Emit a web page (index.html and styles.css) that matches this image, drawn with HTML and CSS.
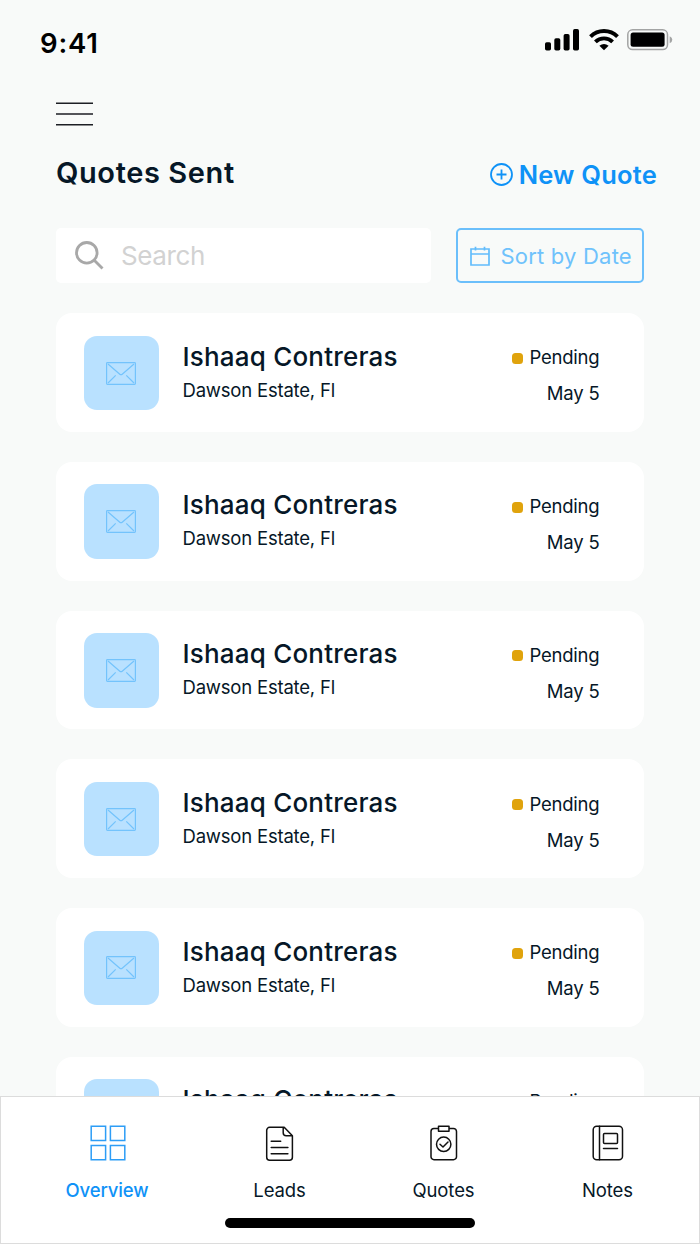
FILE: index.html
```html
<!DOCTYPE html>
<html lang="en">
<head>
    <meta charset="UTF-8">
    <meta name="viewport" content="width=device-width, initial-scale=1.0">
    <title>Quotes Sent</title>
    <link rel="stylesheet" href="styles.css">
</head>
<body>
    <svg class="sprite" width="0" height="0">
        <symbol id="mail" viewBox="0 0 30 23">
            <rect x=".6" y=".6" width="28.8" height="21.8" rx=".8"/>
            <path d="M2 2l11.800 10.200q1.200 1 2.400 0L28 2M2 21l7.700-7.700M28 21l-7.700-7.700"/>
        </symbol>
    </svg>

    <div class="screen">
        <div class="status-bar">
            <span class="time">9:41</span>
            <div class="status-icons">
                <svg width="35" height="22" viewBox="0 0 35 22">
                    <rect x="0" y="13.300" width="6" height="8.200" rx="1.700"/>
                    <rect x="9.300" y="9.300" width="6" height="12.200" rx="1.700"/>
                    <rect x="18.600" y="5" width="6" height="16.500" rx="1.700"/>
                    <rect x="28" y="0" width="6" height="21.500" rx="1.700"/>
                </svg>
                <svg width="30" height="22" viewBox="0 0 30 22">
                    <g fill="none" stroke="#000" stroke-width="3.900">
                        <path d="M1.500 7.700a19 19 0 0 1 27 0"/>
                        <path d="M6.400 12.900a12.200 12.200 0 0 1 17.200 0"/>
                    </g>
                    <path d="M15 21.300l-4.600-4.500q4.600-3.700 9.200 0z"/>
                </svg>
                <svg width="46" height="22" viewBox="0 0 46 22">
                    <rect x=".8" y=".8" width="39.700" height="19.800" rx="4.800" fill="none" stroke="#a3a4a4" stroke-width="1.500"/>
                    <rect x="3.600" y="3.600" width="34" height="14.200" rx="2.500"/>
                    <path d="M42.700 7.200q2.600 1.100 2.600 3.500t-2.600 3.500z" fill="#a3a4a4"/>
                </svg>
            </div>
        </div>

        <div class="content">
            <button class="menu" aria-label="Menu">
                <svg width="37" height="24" viewBox="0 0 37 24">
                    <path d="M0 1.200h37M0 12h37M0 22.800h37"/>
                </svg>
            </button>

            <div class="heading">
                <h1>Quotes Sent</h1>
                <a class="new-quote">
                    <svg width="23" height="23" viewBox="0 0 23 23">
                        <circle cx="11.500" cy="11.500" r="10.500"/>
                        <path d="M11.500 6.500v10M6.500 11.500h10"/>
                    </svg>
                    <span>New Quote</span>
                </a>
            </div>

            <div class="tools">
                <div class="search">
                    <svg width="29" height="29" viewBox="0 0 29 29">
                        <circle cx="11.800" cy="11.800" r="10.300"/>
                        <path d="M19 19l8.500 8.500"/>
                    </svg>
                    <span>Search</span>
                </div>
                <div class="sort">
                    <svg width="20" height="20" viewBox="0 0 20 20">
                        <path d="M1 3h18v16H1zM1 8h18M5.500 .8v3.700M14.500 .8v3.700"/>
                    </svg>
                    <span>Sort by Date</span>
                </div>
            </div>

            <div class="list">
                <div class="card">
                    <div class="thumb"><svg><use href="#mail"/></svg></div>
                    <div class="info">
                        <div class="name">Ishaaq Contreras</div>
                        <div class="place">Dawson Estate, Fl</div>
                    </div>
                    <div class="meta">
                        <div class="state">Pending</div>
                        <div class="date">May 5</div>
                    </div>
                </div>
                <div class="card">
                    <div class="thumb"><svg><use href="#mail"/></svg></div>
                    <div class="info">
                        <div class="name">Ishaaq Contreras</div>
                        <div class="place">Dawson Estate, Fl</div>
                    </div>
                    <div class="meta">
                        <div class="state">Pending</div>
                        <div class="date">May 5</div>
                    </div>
                </div>
                <div class="card">
                    <div class="thumb"><svg><use href="#mail"/></svg></div>
                    <div class="info">
                        <div class="name">Ishaaq Contreras</div>
                        <div class="place">Dawson Estate, Fl</div>
                    </div>
                    <div class="meta">
                        <div class="state">Pending</div>
                        <div class="date">May 5</div>
                    </div>
                </div>
                <div class="card">
                    <div class="thumb"><svg><use href="#mail"/></svg></div>
                    <div class="info">
                        <div class="name">Ishaaq Contreras</div>
                        <div class="place">Dawson Estate, Fl</div>
                    </div>
                    <div class="meta">
                        <div class="state">Pending</div>
                        <div class="date">May 5</div>
                    </div>
                </div>
                <div class="card">
                    <div class="thumb"><svg><use href="#mail"/></svg></div>
                    <div class="info">
                        <div class="name">Ishaaq Contreras</div>
                        <div class="place">Dawson Estate, Fl</div>
                    </div>
                    <div class="meta">
                        <div class="state">Pending</div>
                        <div class="date">May 5</div>
                    </div>
                </div>
                <div class="card">
                    <div class="thumb"><svg><use href="#mail"/></svg></div>
                    <div class="info">
                        <div class="name">Ishaaq Contreras</div>
                        <div class="place">Dawson Estate, Fl</div>
                    </div>
                    <div class="meta">
                        <div class="state">Pending</div>
                        <div class="date">May 5</div>
                    </div>
                </div>
            </div>
        </div>

        <nav class="tab-bar">
            <div class="tabs">
                <a class="tab active">
                    <svg width="36" height="36" viewBox="0 0 36 36">
                        <path d="M1.200 1.200h14.400v14.400H1.200zM20.400 1.200h14.400v14.400H20.400zM1.200 20.400h14.400v14.400H1.200zM20.400 20.400h14.400v14.400H20.400z"/>
                    </svg>
                    <span>Overview</span>
                </a>
                <a class="tab">
                    <svg width="36" height="36" viewBox="0 0 36 36">
                        <path d="M8 2.300h11.500l8.200 8.500v21.400a3 3 0 0 1-3 3H5a3 3 0 0 1-3-3V5.300a3 3 0 0 1 3-3h3M18.500 2.300v5.500a3 3 0 0 0 3 3h6.200M6.500 16.200h9.500M6.500 22.500h16.700M6.500 28.700h16.700" transform="translate(2.700)"/>
                    </svg>
                    <span>Leads</span>
                </a>
                <a class="tab">
                    <svg width="36" height="36" viewBox="0 0 36 36">
                        <path d="M12.500 3.500H8a3 3 0 0 0-3 3v25.200a3 3 0 0 0 3 3h19.500a3 3 0 0 0 3-3V6.500a3 3 0 0 0-3-3h-4.500M12.500 1.200h10.500v5H12.500zM14 19.300l3 2.700 5-5"/>
                        <circle cx="17.700" cy="19.300" r="7.200"/>
                    </svg>
                    <span>Quotes</span>
                </a>
                <a class="tab">
                    <svg width="36" height="36" viewBox="0 0 36 36">
                        <rect x="3.200" y="1.200" width="29.300" height="33.500" rx="3.500"/>
                        <rect x="13.500" y="8.500" width="14" height="10" rx="1"/>
                        <path d="M9.500 1.200v33.500M13.500 23.500h14"/>
                    </svg>
                    <span>Notes</span>
                </a>
            </div>
            <div class="home-indicator"></div>
        </nav>
    </div>
</body>
</html>
```
FILE: styles.css
```css
* {
    box-sizing: border-box;
}
body {
    margin: 0;
    font-family: Inter, sans-serif;
    color: #061727;
}
.sprite { display: block; }
.screen {
    width: 700px;
    height: 1244px;
    display: flex;
    flex-direction: column;
    overflow: hidden;
    background-color: #f8faf9;
}
.status-bar {
    flex: none;
    height: 102px;
    display: flex;
    justify-content: space-between;
    align-items: flex-start;
    padding: 29px 27px 0 40px;
    color: #000;
}
.time {
    font-size: 27.500px;
    font-weight: 600;
    line-height: 28px;
    letter-spacing: 0.8px;
}
.status-icons {
    display: flex;
    gap: 8.500px;
}
.content {
    flex: 1;
    min-height: 0;
    overflow: hidden;
    padding: 0 56px;
}
.menu {
    display: block;
    padding: 0;
    border: none;
    background: none;
}
.menu svg {
    display: block;
    fill: none;
    stroke: #1c1e24;
    stroke-width: 1.6;
}
.heading {
    display: flex;
    justify-content: space-between;
    height: 40px;
    margin: 29px -13px 0 0;
}
h1 {
    margin: 0;
    font-size: 29px;
    font-weight: 600;
    line-height: 36px;
    letter-spacing: 0.6px;
}
.new-quote {
    display: flex;
    align-items: center;
    gap: 6px;
    height: 39px;
    font-size: 25.500px;
    font-weight: 600;
    letter-spacing: 0.2px;
    color: #0f92f7;
}
.new-quote svg {
    fill: none;
    stroke: #0f92f7;
    stroke-width: 1.8;
}
.tools {
    display: flex;
    justify-content: space-between;
    margin-top: 33px;
}
.search {
    display: flex;
    align-items: center;
    gap: 17px;
    width: 375px;
    height: 55px;
    padding-left: 19px;
    border-radius: 5px;
    background-color: #fff;
    font-size: 26px;
    letter-spacing: -0.4px;
    color: #d2d2d2;
}
.search svg {
    fill: none;
    stroke: #a8a8a8;
    stroke-width: 2.8;
}
.sort {
    display: flex;
    align-items: center;
    gap: 11px;
    width: 188px;
    height: 55px;
    padding-left: 11.500px;
    border: 2px solid #6bbffb;
    border-radius: 5px;
    font-size: 22px;
    letter-spacing: 0.2px;
    color: #6fc2fc;
    white-space: nowrap;
}
.sort svg {
    fill: none;
    stroke: #62bcfc;
    stroke-width: 1.7;
}
.sort span {
    padding-top: 1px;
}
.list {
    display: flex;
    flex-direction: column;
    gap: 30px;
    margin-top: 30.300px;
}
.card {
    flex: none;
    display: flex;
    height: 118.700px;
    padding: 22.500px 44.500px 0 28px;
    border-radius: 16px;
    background-color: #fff;
}
.thumb {
    display: flex;
    align-items: center;
    justify-content: center;
    width: 74.500px;
    height: 74.500px;
    border-radius: 13px;
    background-color: #b9e1ff;
}
.thumb svg {
    width: 30px;
    height: 23px;
    fill: none;
    stroke: #73c3fc;
    stroke-width: 1.2;
}
.info {
    flex: 1;
    padding: 1px 0 0 24px;
}
.name {
    font-size: 26px;
    font-weight: 500;
    line-height: 40px;
    letter-spacing: 0.2px;
}
.place {
    font-size: 18.500px;
    line-height: 26px;
    letter-spacing: -0.2px;
}
.meta {
    font-size: 18.500px;
    line-height: 36px;
    letter-spacing: -0.2px;
    text-align: right;
    padding-top: 3.700px;
}
.state {
    display: flex;
    align-items: center;
    gap: 6px;
}
.state::before {
    content: "";
    width: 11px;
    height: 11px;
    margin-top: 2px;
    border-radius: 3.500px;
    background-color: #e0a30c;
}
.tab-bar {
    flex: none;
    height: 148px;
    border: 1px solid #dcdcdc;
    background-color: #fff;
}
.tabs {
    display: grid;
    grid-template-columns: 179px 164px 164px 164px;
    padding: 28px 0 0 17.500px;
}
.tab {
    display: flex;
    flex-direction: column;
    align-items: center;
    gap: 17px;
    font-size: 18.500px;
    line-height: 24px;
    letter-spacing: -0.1px;
}
.tab svg {
    fill: none;
    stroke: #111;
    stroke-width: 1.5;
    stroke-linecap: round;
    stroke-linejoin: round;
}
.tab.active {
    font-weight: 500;
}
.tab.active span {
    margin-left: -2px;
    color: #0f92f7;
}
.tab.active svg {
    stroke: #2d9df6;
    stroke-linejoin: miter;
}
.home-indicator {
    width: 250px;
    height: 10px;
    margin: 16px auto 0;
    border-radius: 5px;
    background-color: #000;
}
```
